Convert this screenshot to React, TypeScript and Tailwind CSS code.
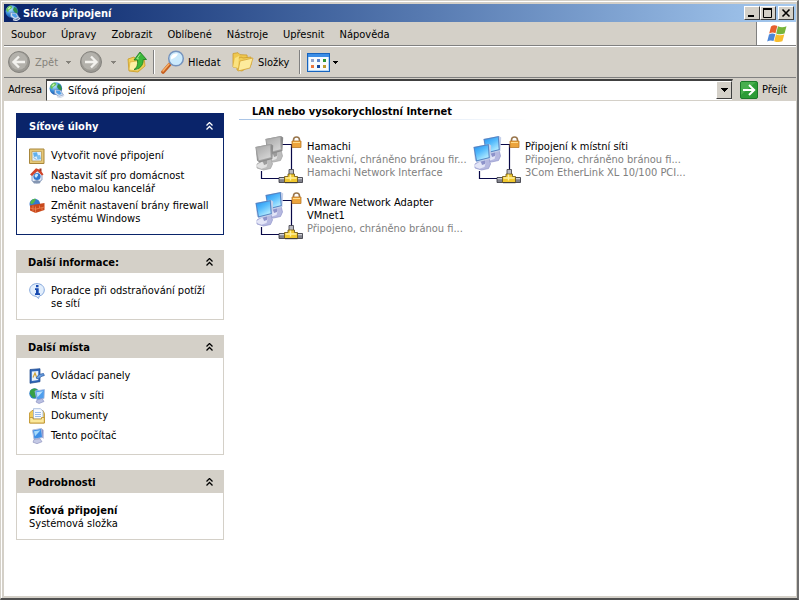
import { useId, type ReactNode } from "react"

const menus = ["Soubor", "Úpravy", "Zobrazit", "Oblíbené", "Nástroje", "Upřesnit", "Nápověda"]

function GlobeIcon() {
  const id = useId()
  return (
    <svg viewBox="0 0 16 16" className="size-4 shrink-0" aria-hidden="true">
      <defs>
        <radialGradient id={id} cx="0.4" cy="0.3" r="0.8">
          <stop offset="0" stopColor="#c4ecff" />
          <stop offset="0.5" stopColor="#3d92dc" />
          <stop offset="1" stopColor="#123f96" />
        </radialGradient>
      </defs>
      <circle cx="6.800" cy="6.500" r="6.300" fill={`url(#${id})`} />
      <path d="M1 5C2 2 4 .5 6 .5l1.500 1.500L6 4 4 5 3 7.500z" fill="#63c05a" />
      <path d="M9 2l2.500 1 1.300 4-1.300 2-2-2-1.500-2z" fill="#2f8f45" />
      <path d="M2.500 4 4.800 1.500l1 1-2 2z" fill="#c9f2ae" />
      <path d="m5.500 7.500 6 .8 3 4.700-4.500 1.500-4.500-3z" fill="#cfdcf0" stroke="#6d89b8" strokeWidth=".6" />
      <path d="m7 8.500 3.800.5 1.900 3-2.700.8-2.700-2z" fill="#4f9fe8" />
      <path d="M8 14.700c3 1.200 6 .3 7-1.700" fill="none" stroke="#d7dfec" strokeWidth="1.300" />
    </svg>
  )
}

function NavCircle({ forward = false }: { forward?: boolean }) {
  return (
    <svg viewBox="0 0 22 22" className="size-[22px] shrink-0" aria-hidden="true">
      <circle cx="11" cy="11" r="10.500" fill="#9b9993" stroke="#85837e" />
      <circle cx="10.500" cy="10" r="8.800" fill="#b3b1ab" />
      <path
        d={forward ? "M5 11h11M11 5.500l5.500 5.500-5.500 5.500" : "M17 11H6M11 5.500 5.500 11l5.500 5.500"}
        fill="none"
        stroke="#f3f2ee"
        strokeWidth="2.400"
      />
    </svg>
  )
}

function Caret({ dim = false }: { dim?: boolean }) {
  return (
    <svg viewBox="0 0 5 3" className="h-[3px] w-[5px] shrink-0" shapeRendering="crispEdges" aria-hidden="true">
      <path d="M0 0h5v1H0zM1 1h3v1H1zM2 2h1v1H2z" fill={dim ? "#85827b" : "#000"} />
    </svg>
  )
}

function UpFolderIcon() {
  return (
    <svg viewBox="0 0 20 22" className="h-[22px] w-5 shrink-0" aria-hidden="true">
      <path d="M1 8 7 6l2 2 8-2 1 9-7 6-9-1z" fill="#f0cf55" stroke="#c99b25" strokeWidth=".8" />
      <path d="M3 11l13-2-5 11-9-1z" fill="#fdf0a4" stroke="#d8ae3a" strokeWidth=".7" />
      <path d="M7 18.500c3-1.500 4-4.500 3.500-9.500H7l6-8 6.500 7.500h-3.300C16.500 14.500 12.500 18.500 7 18.500z" fill="#3cb83a" stroke="#197a20" strokeWidth=".8" />
      <path d="M13 3.300 9.800 7.800h2" fill="none" stroke="#a6eb92" />
    </svg>
  )
}

function SearchIcon() {
  return (
    <svg viewBox="0 0 24 24" className="size-6 shrink-0" aria-hidden="true">
      <path d="m9 14-7 8" stroke="#c65f20" strokeWidth="3.600" strokeLinecap="round" />
      <path d="m8 14-6 7" stroke="#f6ad64" strokeWidth="1.600" strokeLinecap="round" />
      <circle cx="15" cy="8.500" r="7.300" fill="#cbeafc" stroke="#7593bd" strokeWidth="1.500" />
      <path d="M10 7c1-3 4-4 7-3.500-1 3-3 4-7 6z" fill="#fff" />
    </svg>
  )
}

function FoldersIcon() {
  return (
    <svg viewBox="0 0 22 20" className="h-5 w-[22px] shrink-0" aria-hidden="true">
      <path d="M1 1.500 6 .7l2 2 7 .3 1 10-9 3-6-1z" fill="#efc84f" stroke="#cc9a2b" strokeWidth=".8" />
      <path d="m5 7 4-2 2 1 8-1v8l-9 6-5-1z" fill="#f0cd57" stroke="#cc9a2b" strokeWidth=".8" />
      <path d="M8 9l13-3-3 10-12 3z" fill="#fdeb9c" stroke="#d4a436" strokeWidth=".8" />
      <path d="m1 15 2-9 4-2-1 12z" fill="#fae280" />
    </svg>
  )
}

function ViewsIcon() {
  return (
    <svg viewBox="0 0 23 19" className="h-[19px] w-[23px] shrink-0" shapeRendering="crispEdges" aria-hidden="true">
      <path d="M0 0h23v19H0z" fill="#1763bd" />
      <path d="M1 1h21v3H1z" fill="#3b8de6" />
      <path d="M1 4h21v14H1z" fill="#b9daf8" />
      <path d="M2 4h19v13H2z" fill="#f8fbff" />
      <path d="M4 6h3v3H4z" fill="#91a4cb" />
      <path d="M10 6h3v3h-3z" fill="#5c85cb" />
      <path d="M16 6h3v3h-3z" fill="#2b9535" />
      <path d="M4 12h3v3H4z" fill="#ee7840" />
      <path d="M10 12h3v3h-3z" fill="#174a9e" />
      <path d="M16 12h3v3h-3z" fill="#bd9b2d" />
    </svg>
  )
}

function WindowsFlag() {
  return (
    <svg viewBox="0 0 20 18" className="h-[18px] w-5" aria-hidden="true">
      <path d="M4 1.500c2-1.500 4-1.500 6.300-.5L8.500 8.300c-2-1-4-1-6.300.3z" fill="#e6602e" />
      <path d="M11 1.300c2.500 1.200 5.500 1.200 8.500 0l-2 7.200c-3 1-5.800 1-8.300-.1z" fill="#77b53b" />
      <path d="M2 9.500c2.200-1.300 4.200-1.200 6.300-.3l-1.800 6.900c-2-1-4-1-6.300.3z" fill="#4c86d8" />
      <path d="M9 9.300c2.500 1.100 5.200 1.100 8.300.1l-1.900 6.900c-3 1.200-5.700 1-8.200-.1z" fill="#f8bd2d" />
    </svg>
  )
}

function GoIcon() {
  return (
    <svg viewBox="0 0 18 18" className="size-[18px] shrink-0" aria-hidden="true">
      <rect x=".5" y=".5" width="17" height="17" rx="1.500" fill="#2c9c37" stroke="#1b7a29" />
      <path d="M1 1h15L1 14z" fill="#5bbd5d" opacity=".6" />
      <path d="M3 9h11M9 4l5.200 5L9 14" fill="none" stroke="#fff" strokeWidth="2" />
    </svg>
  )
}

function WizardIcon() {
  return (
    <svg viewBox="0 0 16 16" className="size-4" aria-hidden="true">
      <path d="M.5 1h14.500v14.500H.5z" fill="#e6c878" stroke="#a8873c" />
      <path d="M3 3.500h9.500v9.500H3z" fill="#dcefff" stroke="#b8954a" strokeWidth=".7" />
      <path d="m4 4.800 4-.5 1 3.700-4 1z" fill="#5fb0ee" />
      <path d="m7.500 7.500 3.500-.5 1 4-3.500.8z" fill="#7cc0f2" />
      <path d="m4.500 9.500 3 2" stroke="#8fb4d6" />
    </svg>
  )
}

function HomeIcon() {
  return (
    <svg viewBox="0 0 16 16" className="size-4" aria-hidden="true">
      <path d="M3 6v7l5 2 5-3V6L8 3z" fill="#e4ebf7" stroke="#7f93b8" strokeWidth=".8" />
      <path d="M1 6.500 7 .3 11.500 2l3 4.500-1.500 1L8.500 3 3 8z" fill="#d2452a" />
      <path d="M10.500.5h2v3l-2-1z" fill="#9d3320" />
      <circle cx="8" cy="8.500" r="3.600" fill="#2f76cf" />
      <path d="M5.500 8c.5-3 4-3 3.500-.5L7 10z" fill="#c6e9fd" />
      <path d="M3.500 13.500 8 12l4 1.500-1.500 2H5z" fill="#8496b2" />
    </svg>
  )
}

function FirewallIcon() {
  return (
    <svg viewBox="0 0 16 16" className="size-4" aria-hidden="true">
      <circle cx="5.800" cy="6" r="5.300" fill="#3477cf" />
      <path d="M1 5c1.500-4 4-4.500 6-4.300L5.500 4 3 6.500z" fill="#55b84a" />
      <path d="m1 7.500 5-1 9.500-1.500v7l-9 3L1 12.500z" fill="#c8481c" />
      <path d="M1 10l5.500 1.200 9-2.200M6.500 8.500V15M10.500 7.500V10M13 9.800v2.700M4 11v2.500M4 7.500V10" fill="none" stroke="#f08f5e" strokeWidth=".7" />
    </svg>
  )
}

function InfoIcon() {
  return (
    <svg viewBox="0 0 16 16" className="size-4" aria-hidden="true">
      <path d="M8 .6c4.200 0 7.300 2.700 7.300 6.400 0 3-2 5.300-5 6L9.500 15.500 7 13.300C3.300 13 .7 10.400.7 7 .7 3.300 3.800.6 8 .6z" fill="#e2eefc" stroke="#86a8dc" strokeWidth="1" />
      <path d="M7 2h2.500v2.300H7zM6 5.300h3.700v5H11V12H6v-1.700h1V7H6z" fill="#174ab0" />
    </svg>
  )
}

function ControlPanelIcon() {
  return (
    <svg viewBox="0 0 16 16" className="size-4" aria-hidden="true">
      <path d="M1 1.500 11 .7v13L1 15.300z" fill="#2f66b8" stroke="#1e4789" strokeWidth=".7" />
      <path d="m2.800 3.500 6.500-.6v9l-6.500 1.100z" fill="#e6f1fd" />
      <path d="m4 9.500 2-4.500 1.500 4" fill="none" stroke="#d1a337" strokeWidth="1.200" />
      <path d="m7 10 3-3.500 4.500-1 .8 2-3.300 1L9.500 11z" fill="#6aa0e0" stroke="#2a5aa6" strokeWidth=".8" />
    </svg>
  )
}

function NetworkPlacesIcon() {
  return (
    <svg viewBox="0 0 16 16" className="size-4" aria-hidden="true">
      <circle cx="5.500" cy="5.500" r="5.200" fill="#2d80c7" />
      <path d="M1 3c2-3 5-3 7-2L6 5l1 4-3 1-3-4z" fill="#37a046" />
      <path d="m6 3 9.500-1.500L15 10.500 8 12z" fill="#4e9eee" stroke="#a9b9dc" strokeWidth=".8" />
      <path d="m7.500 4.200 6.500-1-5.500 6z" fill="#b9e2fd" />
      <path d="m8 12 5-1.500 2 3-5 2-3-1.500z" fill="#b9bfe1" stroke="#8289bd" strokeWidth=".6" />
    </svg>
  )
}

function DocumentsIcon() {
  return (
    <svg viewBox="0 0 16 16" className="size-4" aria-hidden="true">
      <path d="M.5 5 3 2.500h11l1.500 3v9.500H.5z" fill="#f0cb59" stroke="#be912a" strokeWidth=".8" />
      <path d="M4.500.7h7l2.500 2.500V11h-9.500z" fill="#f6faff" stroke="#8ca6d2" strokeWidth=".7" />
      <path d="M6 4.500h6M6 6.500h6M6 8.500h6" stroke="#8db2e8" strokeWidth=".9" />
      <path d="M.7 9.500h3.300v1.500h8.500V9.500h2.800v5.500H.7z" fill="#fbe89c" stroke="#be912a" strokeWidth=".8" />
    </svg>
  )
}

function ComputerIcon() {
  return (
    <svg viewBox="0 0 16 16" className="size-4" aria-hidden="true">
      <path d="m3.500 2 9-1.500 1 9-8.500 1.700z" fill="#3d8fe6" stroke="#b4bfe0" />
      <path d="m5 3.200 6.500-1-5.500 6z" fill="#a9dbfb" />
      <path d="M12.500.5 14.500 2v9l-1-1.500z" fill="#8c94c6" />
      <path d="m5 11.500 6-.8 2 3-5 2-4-1.500z" fill="#c4c9e5" stroke="#868cb9" strokeWidth=".6" />
    </svg>
  )
}

function ConnectionIcon({ active = false }: { active?: boolean }) {
  const id = useId()
  const monitor = (
    <>
      <path d="m2 20 6-4 8-2 1.500 6-2 4.500-7 1.500-6.500-2z" fill={active ? "#b5b8e0" : "#bdbdbd"} stroke={active ? "#9195cc" : "#a0a0a0"} strokeWidth=".7" />
      <path d="m1.500 21 5-3 6 1.500-1 3.500-5 1.700-4-1.500z" fill={active ? "#e4e6f7" : "#e2e2e2"} />
      <path d="m7 15 5-2v7l-3 1z" fill={active ? "#8d92ca" : "#9c9c9c"} />
      <path d="m.5 3 15.500-3 2.200 1.500-.8 13.500L4.500 18.500 2 16.500z" fill={active ? "#c5d0ea" : "#8c8c8c"} />
      <path d="M.5 3 15.800 0l1 14L3 17.500z" fill={active ? "#5585c4" : "#a3a3a3"} />
      <path d="m1.600 4 13.200-2.700.9 12L3.900 16.200z" fill={`url(#${id})`} />
    </>
  )
  return (
    <svg viewBox="0 0 48 48" className="size-12 shrink-0" aria-hidden="true">
      <defs>
        <linearGradient id={id} x1="0.2" y1="0" x2="0.8" y2="1">
          <stop offset="0" stopColor={active ? "#2c98f2" : "#aaa"} />
          <stop offset="0.4" stopColor={active ? "#55bbfc" : "#bcbcbc"} />
          <stop offset="1" stopColor={active ? "#c2f3ff" : "#d8d8d8"} />
        </linearGradient>
      </defs>
      <path d="M27 8.500h9.500V34M6.500 35v7.500H25" fill="none" stroke="#080848" strokeWidth="1.200" />
      <g transform="translate(10 0)">{monitor}</g>
      <g transform="translate(0 8)">{monitor}</g>
      <path d="M38.500 6V4c0-4 6-4 6 0v2" fill="none" stroke="#99764d" strokeWidth="1.600" />
      <path d="M37 5h9v6.500h-9z" fill="#eca43c" stroke="#b97928" strokeWidth=".8" />
      <path d="M38 6.500h7" stroke="#ffdb8a" />
      <path d="M24 41.500h6v5h-6zM42 41.500h5.500v5H42z" fill="#82838c" stroke="#33343c" strokeWidth=".8" />
      <path d="M24.500 42.700h5M42.500 42.700h4.500" stroke="#e2e3e8" />
      <path d="M34 33.500h4.500v5H34z" fill="#b9bac1" stroke="#3b3b45" strokeWidth=".8" />
      <path d="M29.500 40.500h3.500V38h6.500v2.500h3v6h-13z" fill="#f1c82e" stroke="#6b5314" strokeWidth=".8" />
      <path d="M30.500 42h11M35.500 38.500v6" stroke="#fff0a0" strokeWidth="1.400" />
      <path d="M30 46.700h12.500" stroke="#33343c" />
    </svg>
  )
}

function Chevrons() {
  return (
    <svg viewBox="0 0 7 8" className="h-2 w-[7px]" aria-hidden="true">
      <path d="m.5 3.500 3-3 3 3M.5 7.500l3-3 3 3" fill="none" stroke="currentColor" strokeWidth="1.300" />
    </svg>
  )
}

function Panel({ title, primary = false, children }: { title: string; primary?: boolean; children: ReactNode }) {
  return (
    <section>
      <h2>
        <button
          className={
            primary
              ? "flex h-[25px] w-full items-center justify-between bg-[#0a246a] pr-[11px] pl-[13px] font-bold text-white"
              : "flex h-[23px] w-full items-center justify-between bg-[#d4d0c8] pr-[11px] pl-3 font-bold text-black"
          }
        >
          <span className="pt-px">{title}</span>
          <Chevrons />
        </button>
      </h2>
      <div
        className={
          primary
            ? "border border-t-0 border-[#0a246a] px-3 pt-[10px] pb-[9px]"
            : "border border-t-0 border-[#d4d0c8] px-3 pt-[10px] pb-[9px]"
        }
      >
        {children}
      </div>
    </section>
  )
}

function TaskList({ items }: { items: { icon: ReactNode; lines: string[] }[] }) {
  return (
    <ul className="flex flex-col gap-[3px]">
      {items.map((item) => (
        <li key={item.lines[0]}>
          <a href="#" className="flex items-start gap-[6px] whitespace-nowrap">
            <span className="h-[17px] w-4 shrink-0">{item.icon}</span>
            <span className="pt-px">
              {item.lines.map((line) => (
                <span key={line} className="block">{line}</span>
              ))}
            </span>
          </a>
        </li>
      ))}
    </ul>
  )
}

function Connection({ name, details, active = false }: { name: string[]; details: string[]; active?: boolean }) {
  return (
    <a href="#" className="flex h-14 w-[218px] items-start gap-1 whitespace-nowrap">
      <ConnectionIcon active={active} />
      <span className="pt-1">
        {name.map((line) => (
          <span key={line} className="block">{line}</span>
        ))}
        {details.map((line) => (
          <span key={line} className="block text-[#808080]">{line}</span>
        ))}
      </span>
    </a>
  )
}

function CaptionButton({ label, children }: { label: string; children: ReactNode }) {
  return (
    <button
      aria-label={label}
      className="flex h-[14px] w-4 items-center justify-center border border-t-white border-r-[#404040] border-b-[#404040] border-l-white bg-[#d4d0c8]"
    >
      <svg viewBox="0 0 10 10" className="size-[10px]" fill="none" stroke="#000" aria-hidden="true">
        {children}
      </svg>
    </button>
  )
}

export default function App() {
  return (
    <div className="flex min-h-screen flex-col border-t border-l border-r-2 border-b-2 border-t-[#d4d0c8] border-r-[#707070] border-b-[#505050] border-l-[#d4d0c8] bg-[#d4d0c8] font-['DejaVu_Sans_Condensed','DejaVu_Sans',sans-serif] text-[11px] leading-[13px] text-black">
      <div className="flex grow flex-col border-t border-l border-white pt-[2px] pb-[2px] pl-[2px] pr-px">
        {/* Title bar */}
        <header className="flex h-[18px] items-center justify-between bg-linear-to-r from-[#0a246a] to-[#a6caf0] pr-[2px] pl-px">
          <h1 className="flex items-center gap-[2px] font-bold text-white">
            <GlobeIcon />
            Síťová připojení
          </h1>
          <div className="flex">
            <CaptionButton label="Minimalizovat">
              <path d="M1 8h6" strokeWidth="2" />
            </CaptionButton>
            <CaptionButton label="Maximalizovat">
              <path d="M.5 1v8.500h8V1" strokeWidth="1" />
              <path d="M0 1h9" strokeWidth="2" />
            </CaptionButton>
            <span className="w-[2px]" />
            <CaptionButton label="Zavřít">
              <path d="m1.500 1.500 7 7M8.500 1.500l-7 7" strokeWidth="1.600" />
            </CaptionButton>
          </div>
        </header>

        {/* Menu */}
        <div className="flex h-6 border-b border-[#808080]">
          <nav className="flex grow items-center gap-[15px] pt-px pl-[7px]">
            {menus.map((menu) => (
              <button key={menu}>{menu}</button>
            ))}
          </nav>
          <div className="flex w-10 items-center justify-center border-l border-[#808080] bg-white">
            <WindowsFlag />
          </div>
        </div>

        {/* Toolbar */}
        <div className="flex h-8 items-center border-t border-b border-t-white border-b-[#808080] pl-1">
          <button className="flex items-center gap-[5px] text-[#85827b]" disabled>
            <NavCircle />
            <span className="w-[26px] text-left">Zpět</span>
            <Caret dim />
          </button>
          <button aria-label="Vpřed" className="ml-[9px] flex items-center gap-[9px]" disabled>
            <NavCircle forward />
            <Caret dim />
          </button>
          <button aria-label="Nahoru" className="ml-[11px]">
            <UpFolderIcon />
          </button>
          <span className="mx-[6px] h-6 w-[2px] border-l border-r border-l-[#808080] border-r-white" />
          <button className="flex w-[71px] items-center gap-[3px]">
            <SearchIcon />
            Hledat
          </button>
          <button className="flex items-center gap-1">
            <FoldersIcon />
            <span className="w-8 text-left">Složky</span>
          </button>
          <span className="mr-[6px] ml-[9px] h-6 w-[2px] border-l border-r border-l-[#808080] border-r-white" />
          <button aria-label="Zobrazení" className="flex items-center gap-[3px]">
            <ViewsIcon />
            <Caret />
          </button>
        </div>

        {/* Address bar */}
        <div className="flex h-[23px] items-center pl-1">
          <label htmlFor="address" className="w-[38px]">Adresa</label>
          <div className="flex h-[22px] grow items-center border border-t-2 border-t-[#404040] border-r-[#d4d0c8] border-b-[#d4d0c8] border-l-[#404040] bg-white pl-[2px]">
            <GlobeIcon />
            <input id="address" defaultValue="Síťová připojení" className="min-w-0 grow bg-transparent px-[3px] outline-none" />
            <button
              aria-label="Historie adres"
              className="flex h-[18px] w-4 items-center justify-center border border-t-white border-r-[#404040] border-b-[#404040] border-l-white bg-[#d4d0c8]"
            >
              <svg viewBox="0 0 7 4" className="h-1 w-[7px]" shapeRendering="crispEdges" aria-hidden="true">
                <path d="M0 0h7v1H0zM1 1h5v1H1zM2 2h3v1H2zM3 3h1v1H3z" />
              </svg>
            </button>
          </div>
          <button className="ml-[7px] flex w-14 items-center gap-1">
            <GoIcon />
            Přejít
          </button>
        </div>

        {/* Folder contents */}
        <div className="flex grow bg-white">
          <aside className="flex w-[220px] shrink-0 flex-col gap-[15px] pt-3 pb-4 pl-3">
            <Panel title="Síťové úlohy" primary>
              <TaskList
                items={[
                  { icon: <WizardIcon />, lines: ["Vytvořit nové připojení"] },
                  { icon: <HomeIcon />, lines: ["Nastavit síť pro domácnost", "nebo malou kancelář"] },
                  { icon: <FirewallIcon />, lines: ["Změnit nastavení brány firewall", "systému Windows"] },
                ]}
              />
            </Panel>
            <Panel title="Další informace:">
              <TaskList items={[{ icon: <InfoIcon />, lines: ["Poradce při odstraňování potíží", "se sítí"] }]} />
            </Panel>
            <Panel title="Další místa">
              <TaskList
                items={[
                  { icon: <ControlPanelIcon />, lines: ["Ovládací panely"] },
                  { icon: <NetworkPlacesIcon />, lines: ["Místa v síti"] },
                  { icon: <DocumentsIcon />, lines: ["Dokumenty"] },
                  { icon: <ComputerIcon />, lines: ["Tento počítač"] },
                ]}
              />
            </Panel>
            <Panel title="Podrobnosti">
              <p className="pt-px font-bold">Síťová připojení</p>
              <p>Systémová složka</p>
            </Panel>
          </aside>

          <main className="min-w-0 grow pt-1 pl-[15px]">
            <h2 className="pl-[13px] font-bold">LAN nebo vysokorychlostní Internet</h2>
            <div className="mt-px h-px w-[290px] bg-linear-to-r from-[#a9c4e6] to-white" />
            <div className="flex flex-wrap pt-4 pl-4">
              <Connection name={["Hamachi"]} details={["Neaktivní, chráněno bránou fir...", "Hamachi Network Interface"]} />
              <Connection name={["Připojení k místní síti"]} details={["Připojeno, chráněno bránou fi...", "3Com EtherLink XL 10/100 PCI..."]} active />
              <div className="basis-full" />
              <Connection name={["VMware Network Adapter", "VMnet1"]} details={["Připojeno, chráněno bránou fi..."]} active />
            </div>
          </main>
        </div>
      </div>
    </div>
  )
}
